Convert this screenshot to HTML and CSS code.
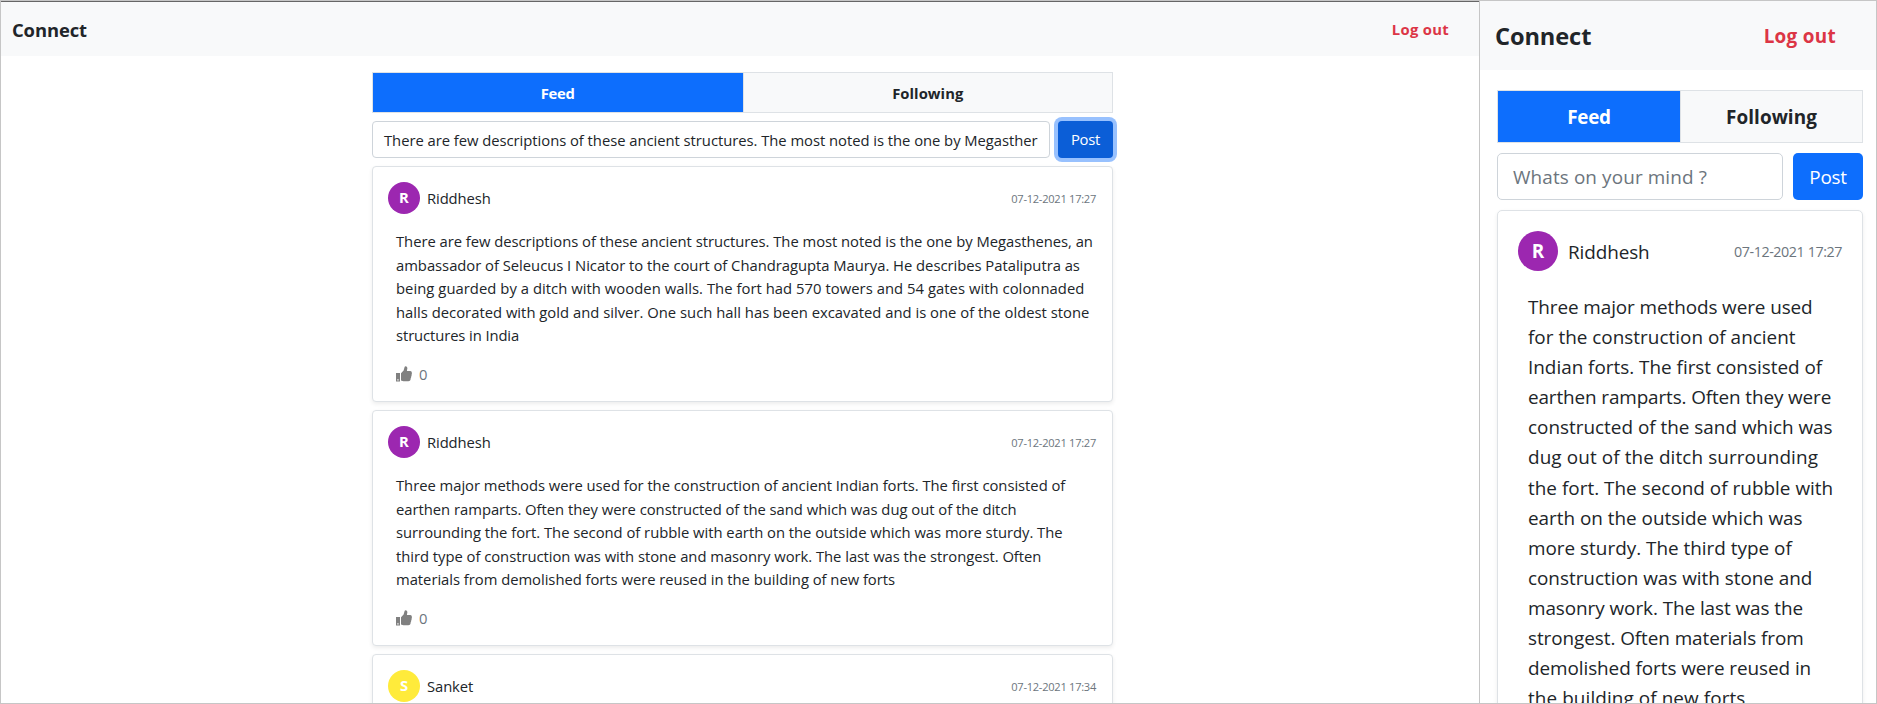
FILE: index.html
```html
<!DOCTYPE html>
<html lang="en">
<head>
<meta charset="utf-8">
<title>Connect</title>
<link rel="stylesheet" href="styles.css">
</head>
<body>
<svg width="0" height="0" class="defs"><symbol id="like" viewBox="0 0 16 16"><path fill-rule="evenodd" d="M0 7h4v8.5H0zM1.3 13.2v1.3h1.3v-1.3z"/><path d="M5 7.2 7.6 4.6 8.6.9Q8.8.2 9.6.2q1.6 0 1.8 1.8L10.9 5h3.4q1.7.2 1.5 1.9.3.9-.2 1.7.2 1-.4 1.9.1 1-.5 1.8 0 2.9-2.4 3H7.4L5 14.6z"/></symbol></svg>
<div class="screens">
<section class="screen desktop">
  <header class="bar"><span class="brand">Connect</span><span class="logout">Log out</span></header>
  <main class="feed">
    <nav class="tabs"><span class="tab active">Feed</span><span class="tab">Following</span></nav>
    <div class="composer"><div class="field">There are few descriptions of these ancient structures. The most noted is the one by Megasther</div><button class="post focus">Post</button></div>
    <article class="card">
      <div class="head"><span class="avatar purple">R</span><span class="name">Riddhesh</span><time>07-12-2021 17:27</time></div>
      <p class="copy"><span class="line a1">There are few descriptions of these ancient structures. The most noted is the one by Megasthenes, an</span><span class="line a2">ambassador of Seleucus I Nicator to the court of Chandragupta Maurya. He describes Pataliputra as</span><span class="line a3">being guarded by a ditch with wooden walls. The fort had 570 towers and 54 gates with colonnaded</span><span class="line a4">halls decorated with gold and silver. One such hall has been excavated and is one of the oldest stone</span><span class="line a5">structures in India</span></p>
      <div class="likes"><svg class="thumb"><use href="#like"/></svg><span>0</span></div>
    </article>
    <article class="card">
      <div class="head"><span class="avatar purple">R</span><span class="name">Riddhesh</span><time>07-12-2021 17:27</time></div>
      <p class="copy"><span class="line">Three major methods were used for the construction of ancient Indian forts. The first consisted of</span><span class="line b2">earthen ramparts. Often they were constructed of the sand which was dug out of the ditch</span><span class="line b2">surrounding the fort. The second of rubble with earth on the outside which was more sturdy. The</span><span class="line">third type of construction was with stone and masonry work. The last was the strongest. Often</span><span class="line">materials from demolished forts were reused in the building of new forts</span></p>
      <div class="likes"><svg class="thumb"><use href="#like"/></svg><span>0</span></div>
    </article>
    <article class="card">
      <div class="head"><span class="avatar yellow">S</span><span class="name">Sanket</span><time>07-12-2021 17:34</time></div>
    </article>
  </main>
</section>
<section class="screen mobile">
  <header class="bar"><span class="brand">Connect</span><span class="logout">Log out</span></header>
  <main class="feed">
    <nav class="tabs"><span class="tab active">Feed</span><span class="tab">Following</span></nav>
    <div class="composer"><div class="field hint">Whats on your mind ?</div><button class="post">Post</button></div>
    <article class="card">
      <div class="head"><span class="avatar purple">R</span><span class="name">Riddhesh</span><time>07-12-2021 17:27</time></div>
      <p class="copy"><span class="line c1">Three major methods were used</span><span class="line c2">for the construction of ancient</span><span class="line c3">Indian forts. The first consisted of</span><span class="line c4">earthen ramparts. Often they were</span><span class="line c5">constructed of the sand which was</span><span class="line c6">dug out of the ditch surrounding</span><span class="line c7">the fort. The second of rubble with</span><span class="line c8">earth on the outside which was</span><span class="line c9">more sturdy. The third type of</span><span class="line c10">construction was with stone and</span><span class="line c11">masonry work. The last was the</span><span class="line c12">strongest. Often materials from</span><span class="line c13">demolished forts were reused in</span><span class="line c14">the building of new forts</span></p>
    </article>
  </main>
</section>
</div>
</body>
</html>
```
FILE: styles.css
```css
* { box-sizing: border-box; }
body { margin: 0; font-family: "Open Sans", "Noto Sans", sans-serif; color: #212529; background: #fff; }
.defs { display: none; }
.screens { display: grid; grid-template-columns: 1479px 398px; height: 704px; overflow: hidden; }
.screen { border: 1px solid #c6c6c6; border-right: 0; height: 704px; overflow: hidden; min-width: 0; }
.mobile { border-right: 1px solid #c6c6c6; }
.bar { display: flex; justify-content: space-between; align-items: center; background: #f8f9fa; font-weight: 700; }
.brand { letter-spacing: -.1px; }
.logout { color: #dc3545; letter-spacing: .3px; }
.tabs { display: grid; grid-template-columns: 1fr 1fr; border: 1px solid #dee2e6; }
.tab { display: flex; align-items: center; justify-content: center; font-weight: 700; background: #f8f9fa; border-left: 1px solid #dee2e6; padding-top: 2px; letter-spacing: .05px; }
.tab.active { background: #0d6efd; color: #fff; border: 0; letter-spacing: -.25px; }
.composer { display: flex; }
.field { flex: 1; min-width: 0; display: flex; align-items: center; border: 1px solid #ced4da; border-radius: 4px; white-space: nowrap; overflow: hidden; }
.hint { color: #6c757d; letter-spacing: .12px; }
.post { font: inherit; color: #fff; background: #0d6efd; border: 0; border-radius: 4px; padding: 1px 0 0; letter-spacing: -.25px; }
.post.focus { background: #0b5ed7; box-shadow: 0 0 0 4px #98c1fe; }
.card { border: 1px solid #dee2e6; border-radius: 4px; background: #fff; box-shadow: 0 2px 4px rgba(0,0,0,.075); }
.head { display: flex; align-items: center; }
.avatar { display: flex; align-items: center; justify-content: center; border-radius: 50%; color: #fff; font-weight: 700; }
.name { letter-spacing: -.1px; padding-top: 1px; }
.purple { background: #9c27b0; }
.yellow { background: #ffeb3b; }
time { margin-left: auto; color: #6c757d; padding-top: 1px; }
.copy { margin: 0; }
.line { display: table; white-space: nowrap; letter-spacing: -.032px; }
.likes { display: flex; align-items: center; color: #6c757d; }
.thumb { fill: #808080; }

/* Line tracking */
.a1 { letter-spacing: -.035px; }
.a2 { letter-spacing: -.026px; }
.a3 { letter-spacing: .043px; }
.a4 { letter-spacing: .008px; }
.a5 { letter-spacing: -.1px; }
.b2 { letter-spacing: -.021px; }
.c1 { letter-spacing: -.085px; }
.c2 { letter-spacing: .015px; }
.c3 { letter-spacing: -.01px; }
.c4 { letter-spacing: -.12px; }
.c5 { letter-spacing: 0; }
.c6 { letter-spacing: .105px; }
.c7 { letter-spacing: .02px; }
.c8 { letter-spacing: -.015px; }
.c9 { letter-spacing: 0; }
.c10 { letter-spacing: -.02px; }
.c11 { letter-spacing: -.065px; }
.c12 { letter-spacing: -.065px; }
.c13 { letter-spacing: -.065px; }
.c14 { letter-spacing: .09px; }

.desktop { font-size: 14.8px; line-height: 23.5px; }
.desktop .bar { height: 55px; border-top: 1px solid #666; padding: 2px 30px 0 11px; }
.desktop .brand { font-size: 18.4px; }
.desktop .feed { width: 741px; margin: 16px 0 0 371px; }
.desktop .tabs { height: 41px; margin-bottom: 8px; }
.desktop .composer { height: 37px; gap: 8px; margin-bottom: 8px; }
.desktop .field { padding: 2px 11px 0; letter-spacing: -.036px; }
.desktop .post { width: 55px; }
.desktop .card { height: 236px; margin-bottom: 8px; padding: 15px; }
.desktop .avatar { width: 32px; height: 32px; margin-right: 7px; }
.desktop time { font-size: 11.1px; letter-spacing: -.27px; padding-right: 1px; }
.desktop .copy { padding: 16px 0 0 8px; }
.desktop .likes { padding: 15px 0 0 8px; gap: 7px; }
.desktop .thumb { width: 16px; height: 16px; }

.mobile { font-size: 18.9px; line-height: 30.1px; }
.mobile .bar { height: 69px; padding: 2px 40px 0 15px; }
.mobile .brand { font-size: 23.6px; }
.mobile .feed { width: 366px; margin: 20px 0 0 17px; }
.mobile .tabs { height: 53px; margin-bottom: 10px; }
.mobile .composer { height: 47px; gap: 10px; margin-bottom: 10px; }
.mobile .field { padding: 2px 15px 0; }
.mobile .post { width: 70px; }
.mobile .field, .mobile .post, .mobile .card { border-radius: 5px; }
.mobile .card { height: 620px; padding: 20px; }
.mobile .avatar { width: 40px; height: 40px; margin-right: 10px; }
.mobile .name, .mobile time { padding-top: 2px; }
.mobile time { font-size: 14.3px; letter-spacing: -.42px; }
.mobile .copy { padding: 21px 0 0 10px; }
```
